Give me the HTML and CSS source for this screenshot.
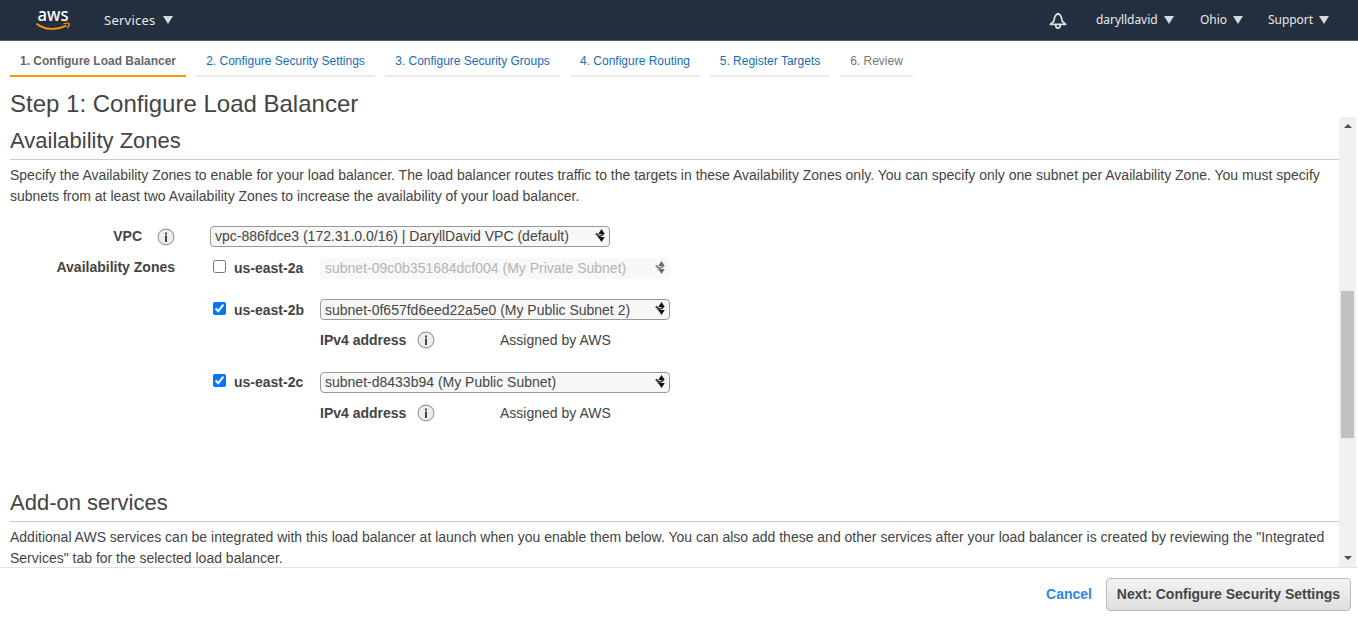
FILE: index.html
```html
<!DOCTYPE html>
<html lang="en">
<head>
<meta charset="utf-8">
<title>Configure Load Balancer</title>
<link rel="stylesheet" href="styles.css">
</head>
<body>
<svg class="defs" width="0" height="0">
  <symbol id="sort" viewBox="0 0 10 13">
    <path d="M6.5 0 9.8 5H3.2Z M3.2 8H9.8L6.5 13Z"/>
    <path d="M.7 4.6 4.6 7.3 8.6 5.2" fill="none" stroke="#333" stroke-width="1.8"/>
    <path d="M3 8.6 1.4 6.6 4.6 8.4Z"/>
  </symbol>
  <symbol id="info" viewBox="0 0 18 18">
    <circle cx="9" cy="9" r="7.9" fill="#eee" stroke="#999" stroke-width="1.1"/>
    <path d="M8 4.5h2v2H8zM8 7.5h2V14H8z" fill="#444"/>
  </symbol>
</svg>
<header class="topbar">
  <svg class="logo" viewBox="0 0 36 26">
    <text x="1.5" y="14" textLength="31" lengthAdjust="spacingAndGlyphs">aws</text>
    <path d="M.6 16.7C9 23.3 21 23.3 30.5 18.5" fill="none" stroke="#f90" stroke-width="1.8"/>
    <path d="M27.5 17C30 16 32.5 16 33 16.7 33.4 17.5 32.5 19.6 31.2 21" fill="none" stroke="#f90" stroke-width="1.2"/>
  </svg>
  <div class="menu services"><span>Services</span><i class="caret"></i></div>
  <svg class="bell" viewBox="0 0 18 18"><path d="M1.4 12.4H16.6L13.2 9.2 12.4 5.4C11.8 3.4 10.6 2.2 9 1.4 7.4 2.2 6.2 3.4 5.6 5.4L4.8 9.2Z M6.7 13C6.7 17.2 11.3 17.2 11.3 13" fill="none" stroke="#dde2e2" stroke-width="1.7" stroke-linejoin="round"/></svg>
  <div class="menu user"><span>darylldavid</span><i class="caret"></i></div>
  <div class="menu region"><span>Ohio</span><i class="caret"></i></div>
  <div class="menu support"><span>Support</span><i class="caret"></i></div>
</header>
<nav class="steps">
  <a class="step current w1">1. Configure Load Balancer</a>
  <a class="step w2">2. Configure Security Settings</a>
  <a class="step w3">3. Configure Security Groups</a>
  <a class="step w4">4. Configure Routing</a>
  <a class="step w5">5. Register Targets</a>
  <a class="step disabled w6">6. Review</a>
</nav>
<h1 class="title">Step 1: Configure Load Balancer</h1>
<div class="pane">
  <main class="content">
    <h2 class="section">Availability Zones</h2>
    <p class="text">Specify the Availability Zones to enable for your load balancer. The load balancer routes traffic to the targets in these Availability Zones only. You can specify only one subnet per Availability Zone. You must specify<br>subnets from at least two Availability Zones to increase the availability of your load balancer.</p>
    <div class="row vpc">
      <div class="label"><span>VPC</span><svg class="info"><use href="#info"/></svg></div>
      <div class="select wide"><span>vpc-886fdce3 (172.31.0.0/16) | DaryllDavid VPC (default)</span><svg class="sort"><use href="#sort"/></svg></div>
    </div>
    <div class="row zone">
      <div class="label">Availability Zones</div>
      <input class="check" type="checkbox"><b class="name">us-east-2a</b>
      <div class="select off"><span>subnet-09c0b351684dcf004 (My Private Subnet)</span><svg class="sort"><use href="#sort"/></svg></div>
    </div>
    <div class="row zone second">
      <div class="label"></div>
      <input class="check" type="checkbox" checked><b class="name">us-east-2b</b>
      <div class="select"><span>subnet-0f657fd6eed22a5e0 (My Public Subnet 2)</span><svg class="sort"><use href="#sort"/></svg></div>
    </div>
    <div class="row ip"><b class="iplabel">IPv4 address</b><svg class="info"><use href="#info"/></svg><span class="assigned">Assigned by AWS</span></div>
    <div class="row zone third">
      <div class="label"></div>
      <input class="check" type="checkbox" checked><b class="name">us-east-2c</b>
      <div class="select"><span>subnet-d8433b94 (My Public Subnet)</span><svg class="sort"><use href="#sort"/></svg></div>
    </div>
    <div class="row ip"><b class="iplabel">IPv4 address</b><svg class="info"><use href="#info"/></svg><span class="assigned">Assigned by AWS</span></div>
    <h2 class="section addon">Add-on services</h2>
    <p class="text">Additional AWS services can be integrated with this load balancer at launch when you enable them below. You can also add these and other services after your load balancer is created by reviewing the "Integrated<br>Services" tab for the selected load balancer.</p>
  </main>
  <div class="scrollbar"><i class="up"></i><i class="thumb"></i><i class="down"></i></div>
</div>
<footer class="footer"><a class="cancel">Cancel</a><button class="next">Next: Configure Security Settings</button></footer>
</body>
</html>
```
FILE: styles.css
```css
* { box-sizing: border-box; }
body { margin: 0; width: 1358px; height: 619px; overflow: hidden; background: #fff; color: #444; font: 14px/21px "Liberation Sans", Arial, sans-serif; }
.defs { display: block; }
.topbar { display: flex; align-items: center; height: 41px; background: #232f3e; border-bottom: 1px solid #545b64; color: #e6eaea; font-family: "Noto Sans", sans-serif; }
.logo { width: 36px; height: 26px; margin-left: 36px; overflow: visible; }
.logo text { font: 500 17.5px/1 "Noto Sans", sans-serif; fill: #fff; }
.menu { display: flex; align-items: center; justify-content: space-between; font-size: 12px; line-height: 20px; letter-spacing: -.05px; white-space: nowrap; }
.caret { border: 5px solid transparent; border-top: 8px solid #d5dbdb; border-bottom: 0; }
.services { width: 69px; margin-left: 32px; font-size: 13px; letter-spacing: .25px; }
.bell { width: 18px; height: 18px; margin: 2px 0 0 876px; }
.user { width: 78px; margin-left: 29px; }
.region { width: 43px; margin-left: 26px; }
.support { width: 61px; margin-left: 25px; }
.steps { display: flex; gap: 10px; height: 36px; padding-left: 10px; }
.step { height: 36px; border-bottom: 2px solid #eaeded; font-size: 12px; line-height: 40px; text-align: center; color: #146eb4; white-space: nowrap; }
.current { color: #666; font-weight: bold; border-color: #f90; }
.disabled { color: #777; }
.w1 { width: 176px; } .w2 { width: 179px; } .w3 { width: 175px; }
.w4 { width: 130px; } .w5 { width: 120px; } .w6 { width: 73px; }
.title { margin: 0; padding: 12px 0 0 10px; height: 40px; font-size: 24px; line-height: 30px; font-weight: normal; }
.pane { display: flex; height: 451px; border-bottom: 1px solid #e3e3e3; padding-right: 2px; }
.content { width: 1339px; padding-left: 10px; overflow: hidden; }
.section { margin: 0; height: 43px; padding-top: 10px; border-bottom: 1px solid #ccc; font-size: 22px; line-height: 28px; font-weight: normal; }
.text { margin: 0; padding-top: 5px; white-space: nowrap; }
.row { display: flex; height: 21px; }
.label { display: flex; justify-content: flex-end; width: 165px; font-weight: bold; line-height: 19px; white-space: nowrap; }
.vpc { margin-top: 19px; }
.vpc .label { line-height: 21px; }
.info { width: 18px; height: 18px; margin-left: 15px; margin-right: -1px; margin-top: 1.5px; flex: none; }
.vpc .info { margin-right: 0; }
.select { display: flex; align-items: center; justify-content: space-between; width: 350px; height: 21px; padding: 0 4px 0 4px; border: 1px solid #999; border-radius: 4px; background: #f8f8f8; white-space: nowrap; }
.wide { width: 400px; margin-left: 35px; }
.off { border-color: #f8f8f8; color: #b4b4b4; }
.sort { width: 10px; height: 13px; fill: #111; margin-top: -2px; }
.off .sort { opacity: .6; }
.zone { margin-top: 11px; }
.check { width: 13px; height: 13px; margin: 2px 8px 0 38px; }
.name { width: 86px; }
.second { margin-top: 20px; }
.second .check { margin-top: 3px; }
.second .name, .second .select span { padding-top: 1px; }
.ip { margin-top: 10px; padding-left: 310px; }
.iplabel { width: 86px; white-space: nowrap; }
.ip .info { margin-left: 10.5px; margin-right: 0; margin-top: .5px; }
.assigned { margin-left: 65.5px; }
.third { margin-top: 21px; }
.addon { margin-top: 55px; padding-top: 10px; }
.scrollbar { display: flex; flex-direction: column; align-items: center; width: 17px; height: 450px; background: #f0f0f0; }
.up { margin-top: 7px; border: 4px solid transparent; border-top: 0; border-bottom: 4px solid #505050; }
.thumb { width: 13px; height: 147px; margin: 163px 0 118px; background: #c1c1c1; }
.down { border: 4px solid transparent; border-bottom: 0; border-top: 4px solid #505050; }
.footer { display: flex; justify-content: flex-end; align-items: center; height: 51px; padding: 0 7px 0 0; }
.cancel { margin-right: 14px; margin-top: 1px; color: #2e86de; font-weight: bold; }
.next { width: 245px; height: 33px; margin-top: 1px; padding: 0; border: 1px solid #bbb; border-radius: 4px; background: linear-gradient(#f3f3f3, #dedede); color: #444; font: bold 14px "Liberation Sans", Arial, sans-serif; white-space: nowrap; }
```
